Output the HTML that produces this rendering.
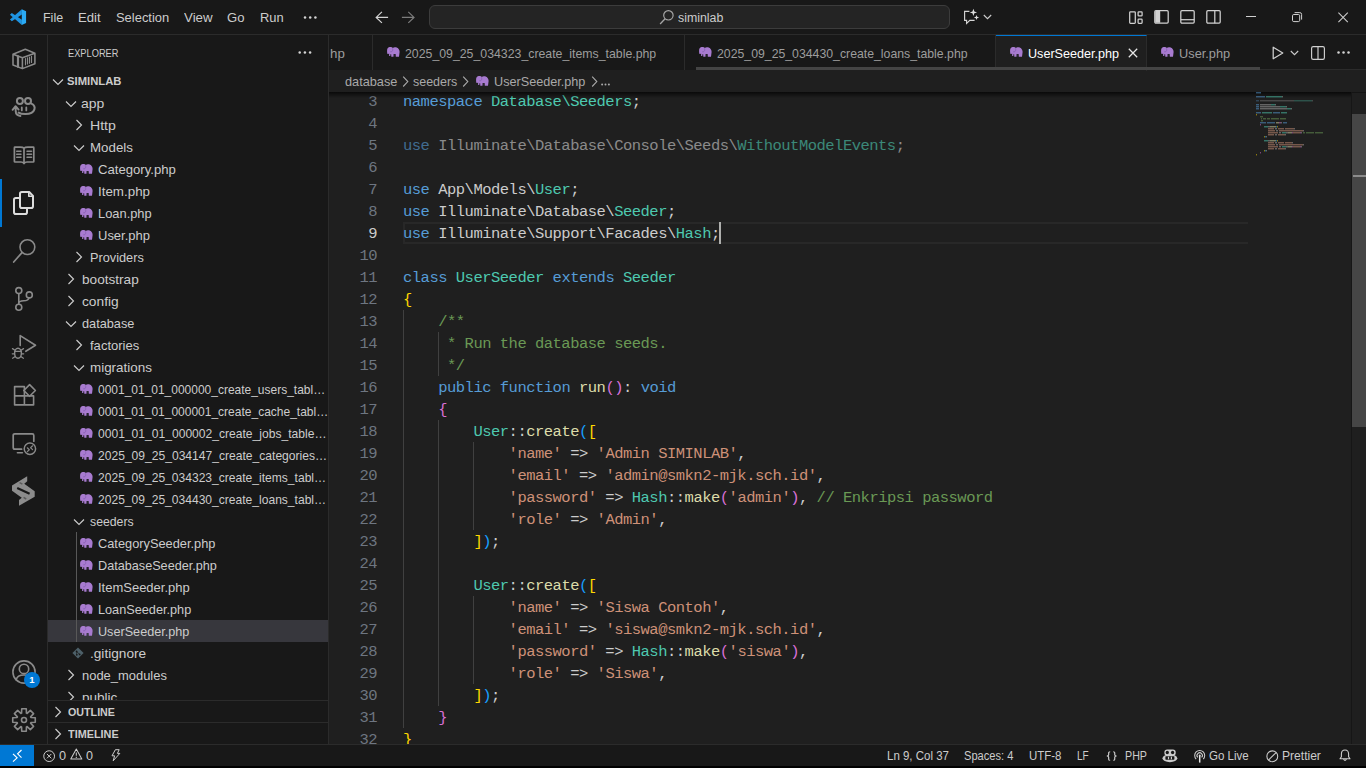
<!DOCTYPE html>
<html>
<head>
<meta charset="utf-8">
<title>UserSeeder.php - siminlab - Visual Studio Code</title>
<style>
*{box-sizing:border-box;margin:0;padding:0}
html,body{width:1366px;height:768px;overflow:hidden;background:#181818}
body{font-family:"Liberation Sans",sans-serif;font-size:13px;color:#cccccc;position:relative}
.abs{position:absolute}
svg{display:block;overflow:visible}
#titlebar{position:absolute;left:0;top:0;width:1366px;height:35px;background:#181818;border-bottom:1px solid #2b2b2b}
#cmd{position:absolute;left:429px;top:5px;width:521px;height:24px;border:1px solid #3c3c3c;border-radius:6px;background:#242424}
#activity{position:absolute;left:0;top:35px;width:48px;height:709px;background:#181818;border-right:1px solid #2b2b2b}
#sidebar{position:absolute;left:48px;top:35px;width:281px;height:709px;background:#181818;border-right:1px solid #2b2b2b;overflow:hidden}
.sel{background:#37373d}
#editor{position:absolute;left:329px;top:35px;width:1037px;height:709px;background:#1f1f1f;overflow:hidden}
#tabs{position:absolute;left:0;top:0;width:1037px;height:35px;background:#181818;border-bottom:1px solid #2b2b2b}
.tab{position:absolute;top:0;height:35px;border-right:1px solid #2b2b2b;background:#181818}
.tab.active{background:#1f1f1f;border-top:1px solid #0078d4;height:36px}
#code{position:absolute;left:0;top:0;width:1037px;height:709px;font-family:"Liberation Mono",monospace;color:#cccccc}
.ln{position:absolute;text-align:right;height:22px;line-height:22px;white-space:pre}
.cl{position:absolute;height:22px;line-height:22px;white-space:pre}
.k{color:#569cd6}.c{color:#4ec9b0}.f{color:#dcdcaa}.s{color:#ce9178}.m{color:#6a9955}
.b1{color:#ffd700}.b2{color:#da70d6}.b3{color:#179fff}
.dim{opacity:.62}
#code{font-size:15.5px;letter-spacing:-0.5045px}
.ln{left:0;width:48.00px}
.cl{left:74px}
#status{position:absolute;left:0;top:744px;width:1366px;height:22px;background:#181818;border-top:1px solid #2b2b2b}
#bottom{position:absolute;left:0;top:766px;width:1366px;height:2px;background:#000}
</style>
</head>
<body>
<div id="titlebar">
<svg class="abs" style="left:4px;top:4px" width="32" height="28" viewBox="0 0 878 768" ><path d="M490 145 L490 285 L215 472 L163 425 Z" fill="#1f94e2"/><path d="M490 575 L490 435 L215 248 L163 295 Z" fill="#1f94e2"/><path d="M488 143 L606 200 V520 L488 577 Z" fill="#2aaaf4"/></svg>
<span class="abs " style="transform-origin:0 50%;transform:scaleX(0.9593);left:42.70px;top:0px;line-height:35px;font-size:13px;white-space:pre">File</span>
<span class="abs " style="transform-origin:0 50%;transform:scaleX(1.0086);left:78.00px;top:0px;line-height:35px;font-size:13px;white-space:pre">Edit</span>
<span class="abs " style="transform-origin:0 50%;transform:scaleX(0.9947);left:115.60px;top:0px;line-height:35px;font-size:13px;white-space:pre">Selection</span>
<span class="abs " style="transform-origin:0 50%;transform:scaleX(1.0231);left:183.80px;top:0px;line-height:35px;font-size:13px;white-space:pre">View</span>
<span class="abs " style="transform-origin:0 50%;transform:scaleX(1.0090);left:227.10px;top:0px;line-height:35px;font-size:13px;white-space:pre">Go</span>
<span class="abs " style="transform-origin:0 50%;transform:scaleX(0.9933);left:259.90px;top:0px;line-height:35px;font-size:13px;white-space:pre">Run</span>
<svg class="abs" style="left:303px;top:14.5px" width="15" height="5" viewBox="0 0 15 5" ><circle cx="2" cy="2.5" r="1.25" fill="#d4d4d4"/><circle cx="7.2" cy="2.5" r="1.25" fill="#d4d4d4"/><circle cx="12.4" cy="2.5" r="1.25" fill="#d4d4d4"/></svg>
<svg class="abs" style="left:375px;top:11px" width="14" height="13" viewBox="0 0 14 13" ><path d="M6.9 .9 L1.2 6.4 L6.9 11.9 M1.4 6.4 H13.1" fill="none" stroke="#d4d4d4" stroke-width="1.2"/></svg>
<svg class="abs" style="left:401px;top:11px" width="14" height="13" viewBox="0 0 14 13" ><path d="M7.3 .9 L13 6.4 L7.3 11.9 M12.8 6.4 H.9" fill="none" stroke="#7c7c7c" stroke-width="1.2"/></svg>
<div id="cmd"></div>
<svg class="abs" style="left:659px;top:9.5px" width="15" height="15" viewBox="0 0 15 15" ><circle cx="9.4" cy="5.3" r="4.7" fill="none" stroke="#a6a6a6" stroke-width="1.2"/><path d="M6.1 8.7 L1.1 14" stroke="#a6a6a6" stroke-width="1.3" fill="none"/></svg>
<span class="abs " style="transform-origin:0 50%;transform:scaleX(0.9878);left:677.60px;top:6px;line-height:24px;font-size:12.5px;white-space:pre">siminlab</span>
<svg class="abs" style="left:963px;top:9px" width="17" height="16" viewBox="0 0 17 16" ><path d="M6.4 2.4 H1.6 V11.3 H3.6 V14.4 L6.8 11.3 H11.6" fill="none" stroke="#d4d4d4" stroke-width="1.15" stroke-linejoin="miter"/><path d="M10.4 -.3 L11.35 2.45 L14.1 3.4 L11.35 4.35 L10.4 7.1 L9.45 4.35 L6.7 3.4 L9.45 2.45 Z" fill="#dedede"/><path d="M13.5 5.9 L14.2 7.8 L16.1 8.5 L14.2 9.2 L13.5 11.1 L12.8 9.2 L10.9 8.5 L12.8 7.8 Z" fill="#dedede"/></svg>
<svg class="abs" style="left:983px;top:14px" width="9" height="6" viewBox="0 0 9 6" ><path d="M.8 1 L4.5 4.7 L8.2 1" fill="none" stroke="#ccc" stroke-width="1.1"/></svg>
<svg class="abs" style="left:1128.5px;top:10.5px" width="14" height="13" viewBox="0 0 14 13" ><rect x=".7" y=".8" width="5.6" height="11.5" rx=".8" fill="none" stroke="#d0d0d0" stroke-width="1.25"/><rect x="9.1" y=".8" width="4" height="4.1" rx=".7" fill="none" stroke="#d0d0d0" stroke-width="1.25"/><rect x="9.1" y="8.2" width="4" height="4.1" rx=".7" fill="none" stroke="#d0d0d0" stroke-width="1.25"/></svg>
<svg class="abs" style="left:1153.5px;top:10px" width="15" height="14" viewBox="0 0 15 14" ><rect x=".8" y=".6" width="13.4" height="12.6" rx="1.1" fill="none" stroke="#d0d0d0" stroke-width="1.25"/><path d="M1.2 1.8 Q1.2 1 2 1 H6.2 V12.8 H2 Q1.2 12.8 1.2 12 Z" fill="#d2d2d2"/></svg>
<svg class="abs" style="left:1179.5px;top:10px" width="15" height="14" viewBox="0 0 15 14" ><rect x=".8" y=".6" width="13.4" height="12.6" rx="1.1" fill="none" stroke="#d0d0d0" stroke-width="1.25"/><path d="M.8 9.7 H14.2" stroke="#d0d0d0" stroke-width="1.25"/></svg>
<svg class="abs" style="left:1205.5px;top:10px" width="15" height="14" viewBox="0 0 15 14" ><rect x=".8" y=".6" width="13.4" height="12.6" rx="1.1" fill="none" stroke="#d0d0d0" stroke-width="1.25"/><path d="M8.8 .6 V13.2" stroke="#d0d0d0" stroke-width="1.25"/></svg>
<svg class="abs" style="left:1246px;top:16px" width="10" height="2" viewBox="0 0 10 2" ><rect x="0" y="0" width="10" height="1" fill="#d0d0d0"/></svg>
<svg class="abs" style="left:1292px;top:12px" width="10" height="11" viewBox="0 0 10 11" ><rect x=".5" y="2.5" width="7.2" height="7.1" rx="1.3" fill="none" stroke="#d0d0d0" stroke-width="1"/><path d="M2.6 .6 H7.8 Q9.6 .6 9.6 2.4 V7.6" fill="none" stroke="#d0d0d0" stroke-width="1"/></svg>
<svg class="abs" style="left:1338px;top:12px" width="10" height="11" viewBox="0 0 10 11" ><path d="M.4 .6 L9.8 10.2 M9.8 .6 L.4 10.2" stroke="#ccc" stroke-width="1.05" fill="none"/></svg>
</div>
<div id="activity">
<svg class="abs" style="left:12px;top:12px" width="24" height="24" viewBox="0 0 24 24" ><path d="M1 7.3 L13.3 2.3 L22.9 6.2 V16.8 L10.4 21.6 L1 18 Z M1 7.3 L10.4 10.8 L22.9 6.2 M10.4 10.8 V21.6" fill="none" stroke="#8a8a8a" stroke-width="1.55" stroke-linejoin="round" stroke-linecap="round" /><path d="M6 9.4 V19.8" fill="none" stroke="#8a8a8a" stroke-width="2.2" stroke-linejoin="round" stroke-linecap="round" /><path d="M13.5 11.6 V17.8 M15.5 10.8 V17 M17.5 10 V16.2 M19.5 9.2 V15.4" fill="none" stroke="#8a8a8a" stroke-width="1.15" stroke-linejoin="round" stroke-linecap="round" /></svg>
<svg class="abs" style="left:12px;top:60px" width="24" height="24" viewBox="0 0 24 24" ><circle cx="7.9" cy="6" r="3" fill="none" stroke="#8a8a8a" stroke-width="2" stroke-linejoin="round" stroke-linecap="round" /><circle cx="16" cy="6" r="3" fill="none" stroke="#8a8a8a" stroke-width="2" stroke-linejoin="round" stroke-linecap="round" /><path d="M19.4 8.6 C22 9.8 23 12.4 22.4 14.4 C21.4 17.6 17.4 19 13.4 19 C10.6 19 8 18.6 6.6 17.6" fill="none" stroke="#8a8a8a" stroke-width="2" stroke-linejoin="round" stroke-linecap="round" /><path d="M9.8 12.4 V15.4 M14.3 12.4 V15.4" fill="none" stroke="#8a8a8a" stroke-width="1.8" stroke-linejoin="round" stroke-linecap="round" /><path d="M.6 14.8 L3.6 11.2 L6.6 14.6 M3.7 11.6 V16.4 C3.8 19 5.6 20.6 8.4 21" fill="none" stroke="#8a8a8a" stroke-width="1.9" stroke-linejoin="round" stroke-linecap="round" /></svg>
<svg class="abs" style="left:12px;top:108px" width="24" height="24" viewBox="0 0 24 24" ><path d="M12 5.2 C11 4.2 9.6 4.1 8.4 4.1 H3 Q2.4 4.1 2.4 4.7 V18.4 Q2.4 19 3 19 H9 C10.4 19 11.4 19.6 12 20.6 C12.6 19.6 13.6 19 15 19 H21.2 Q21.8 19 21.8 18.4 V4.7 Q21.8 4.1 21.2 4.1 H15.6 C14.4 4.1 13 4.2 12 5.2 Z M12 5.2 V20.4" fill="none" stroke="#8a8a8a" stroke-width="1.7" stroke-linejoin="round" stroke-linecap="round" /><path d="M4.7 8.3 H9 M4.7 11.25 H9 M4.7 14.25 H9 M15 8.3 H19.6 M15 11.25 H19.6 M15 14.25 H19.6" fill="none" stroke="#8a8a8a" stroke-width="1.45" stroke-linejoin="round" stroke-linecap="round" /></svg>
<svg class="abs" style="left:12px;top:156px" width="24" height="24" viewBox="0 0 24 24" ><path d="M8 15.2 V2.8 Q8 1 9.8 1 H17.2 L21 4.9 V15.2 Q21 17 19.2 17 H9.8 Q8 17 8 15.2 Z" fill="none" stroke="#dcdcdc" stroke-width="2" stroke-linejoin="round" stroke-linecap="round" /><path d="M16.8 1.4 V5.3 H20.6" fill="none" stroke="#dcdcdc" stroke-width="1.6" stroke-linejoin="round" stroke-linecap="round" /><path d="M7.2 7 H3.8 Q2 7 2 8.8 V21.2 Q2 23 3.8 23 H13.2 Q15 23 15 21.2 V17.6" fill="none" stroke="#dcdcdc" stroke-width="2" stroke-linejoin="round" stroke-linecap="round" /></svg>
<svg class="abs" style="left:12px;top:204px" width="24" height="24" viewBox="0 0 24 24" ><circle cx="15.4" cy="8.1" r="7.4" fill="none" stroke="#8a8a8a" stroke-width="1.6" stroke-linejoin="round" stroke-linecap="round" /><path d="M10 13.6 L1.7 23" fill="none" stroke="#8a8a8a" stroke-width="1.7" stroke-linejoin="round" stroke-linecap="round" /></svg>
<svg class="abs" style="left:12px;top:252px" width="24" height="24" viewBox="0 0 24 24" ><circle cx="6.8" cy="3.6" r="3" fill="none" stroke="#8a8a8a" stroke-width="1.6" stroke-linejoin="round" stroke-linecap="round" /><circle cx="6.8" cy="20.2" r="3" fill="none" stroke="#8a8a8a" stroke-width="1.6" stroke-linejoin="round" stroke-linecap="round" /><circle cx="17.3" cy="7.9" r="3" fill="none" stroke="#8a8a8a" stroke-width="1.6" stroke-linejoin="round" stroke-linecap="round" /><path d="M6.8 6.8 V17 M16.9 11 C16.6 13.4 14.6 13.7 11.6 13.8 C9 13.9 7 14.4 6.8 16.4" fill="none" stroke="#8a8a8a" stroke-width="1.6" stroke-linejoin="round" stroke-linecap="round" /></svg>
<svg class="abs" style="left:12px;top:300px" width="24" height="24" viewBox="0 0 24 24" ><path d="M8.2 10.4 V.6 L23.5 10.2 L13.8 16.3" fill="none" stroke="#8a8a8a" stroke-width="1.6" stroke-linejoin="round" stroke-linecap="round" /><ellipse cx="6" cy="18.2" rx="3.4" ry="5" fill="none" stroke="#8a8a8a" stroke-width="1.5" stroke-linejoin="round" stroke-linecap="round" /><path d="M2.8 16.4 H9.2" fill="none" stroke="#8a8a8a" stroke-width="1.4" stroke-linejoin="round" stroke-linecap="round" /><path d="M2.6 15 L.5 13.6 M9.4 15 L11.5 13.6 M2.4 18.8 H.3 M11.7 18.8 H9.6 M2.8 21.8 L.6 23.2 M9.2 21.8 L11.4 23.2" fill="none" stroke="#8a8a8a" stroke-width="1.3" stroke-linejoin="round" stroke-linecap="round" /></svg>
<svg class="abs" style="left:12px;top:348px" width="24" height="24" viewBox="0 0 24 24" ><path d="M2.6 3.6 H12.4 V12.9 H21.6 V21.9 H2.6 Z M2.6 12.9 H12.4 V21.9" fill="none" stroke="#8a8a8a" stroke-width="1.6" stroke-linejoin="round" stroke-linecap="round" /><path d="M17.6 1.6 L23.4 7.5 L17.6 13.3 L11.8 7.5 Z" fill="none" stroke="#8a8a8a" stroke-width="1.6" stroke-linejoin="round" stroke-linecap="round" /></svg>
<svg class="abs" style="left:12px;top:396px" width="24" height="24" viewBox="0 0 24 24" ><path d="M9.6 18.2 H2.8 Q1.2 18.2 1.2 16.6 V4.4 Q1.2 2.8 2.8 2.8 H20.2 Q21.8 2.8 21.8 4.4 V10.2" fill="none" stroke="#8a8a8a" stroke-width="1.7" stroke-linejoin="round" stroke-linecap="round" /><path d="M5.4 21.8 H10.4" fill="none" stroke="#8a8a8a" stroke-width="1.6" stroke-linejoin="round" stroke-linecap="round" /><circle cx="17.9" cy="17.7" r="5.7" fill="none" stroke="#8a8a8a" stroke-width="1.5" stroke-linejoin="round" stroke-linecap="round" /><path d="M15.3 16.8 L17.3 18.7 L15.3 20.6 M20.6 14.8 L18.6 16.7 L20.6 18.6" fill="none" stroke="#8a8a8a" stroke-width="1.2" stroke-linejoin="round" stroke-linecap="round" /></svg>
<svg class="abs" style="left:8px;top:440px" width="32" height="32" viewBox="0 0 32 32" ><path d="M19.2 1.25 V6.25 L16.25 8.75 L26.7 16.25 V21.7 L11 30.8 V25 L13.75 22.7 L4 15.8 V10.4 Z" fill="#8c8c8c"/><path d="M9.2 13 L21.6 18.8" stroke="#181818" stroke-width="2.2" fill="none"/><path d="M11.6 7.6 L14.4 9.2 M15.6 22.4 L18.2 24" stroke="#555555" stroke-width="1.5" fill="none" opacity=".9"/></svg>
<svg class="abs" style="left:12px;top:625px" width="24" height="24" viewBox="0 0 24 24" ><circle cx="12" cy="12" r="11.1" fill="none" stroke="#8a8a8a" stroke-width="1.6" stroke-linejoin="round" stroke-linecap="round" /><circle cx="12" cy="8.9" r="4.7" fill="none" stroke="#8a8a8a" stroke-width="1.6" stroke-linejoin="round" stroke-linecap="round" /><path d="M4.2 19.8 C5 16.2 8 15 12 15 C16 15 19 16.2 19.8 19.8" fill="none" stroke="#8a8a8a" stroke-width="1.6" stroke-linejoin="round" stroke-linecap="round" /></svg>
<div class="abs" style="left:24px;top:637px;width:16px;height:16px;border-radius:8px;background:#0078d4"></div>
<span class="abs" style="left:24px;top:637px;width:16px;height:16px;line-height:16px;text-align:center;font-size:9.5px;font-weight:bold;color:#fff">1</span>
<svg class="abs" style="left:12px;top:673px" width="24" height="24" viewBox="0 0 24 24" ><path d="M9.72 0.73 L14.28 0.73 L14.43 5.12 L15.14 5.41 L18.35 2.41 L21.59 5.65 L18.59 8.86 L18.88 9.57 L23.27 9.72 L23.27 14.28 L18.88 14.43 L18.59 15.14 L21.59 18.35 L18.35 21.59 L15.14 18.59 L14.43 18.88 L14.28 23.27 L9.72 23.27 L9.57 18.88 L8.86 18.59 L5.65 21.59 L2.41 18.35 L5.41 15.14 L5.12 14.43 L0.73 14.28 L0.73 9.72 L5.12 9.57 L5.41 8.86 L2.41 5.65 L5.65 2.41 L8.86 5.41 L9.57 5.12 Z" fill="none" stroke="#8a8a8a" stroke-width="1.6" stroke-linejoin="round" stroke-linecap="round" /><circle cx="12" cy="12" r="2.5" fill="none" stroke="#8a8a8a" stroke-width="1.6" stroke-linejoin="round" stroke-linecap="round" /></svg>
<div class="abs" style="left:0;top:144px;width:2px;height:48px;background:#0078d4"></div>
</div>
<div id="sidebar">
<span class="abs " style="transform-origin:0 50%;transform:scaleX(0.8428);left:19.80px;top:0px;line-height:36px;font-size:11px;color:#cccccc;white-space:pre">EXPLORER</span>
<svg class="abs" style="left:250px;top:15px" width="15" height="5" viewBox="0 0 15 5" ><circle cx="1.7" cy="2.5" r="1.25" fill="#d4d4d4"/><circle cx="6.9" cy="2.5" r="1.25" fill="#d4d4d4"/><circle cx="12.1" cy="2.5" r="1.25" fill="#d4d4d4"/></svg>
<div class="abs" style="left:0;top:0;width:280px;height:665px;overflow:hidden"><div class="abs sel" style="left:0;top:585px;width:280px;height:22px"></div>
<div class="abs" style="left:28px;top:497px;width:1px;height:110px;background:#585858"></div>
<svg class="abs" style="left:4px;top:42.5px" width="12" height="8" viewBox="0 0 12 8" ><path d="M1 1.5 L6 6.5 L11 1.5" fill="none" stroke="#cccccc" stroke-width="1.15" stroke-linejoin="miter"/></svg>
<span class="abs " style="transform-origin:0 50%;transform:scaleX(1.0231);left:19.20px;top:35px;line-height:22px;font-size:11px;color:#cccccc;font-weight:bold;white-space:pre">SIMINLAB</span>
<svg class="abs" style="left:17.200000000000003px;top:64.5px" width="12" height="8" viewBox="0 0 12 8" ><path d="M1 1.5 L6 6.5 L11 1.5" fill="none" stroke="#cccccc" stroke-width="1.15" stroke-linejoin="miter"/></svg>
<span class="abs " style="transform-origin:0 50%;transform:scaleX(1.0736);left:33.30px;top:58px;line-height:22px;font-size:13px;color:#cccccc;white-space:pre">app</span>
<svg class="abs" style="left:27.200000000000003px;top:84px" width="8" height="12" viewBox="0 0 8 12" ><path d="M1.5 1 L6.5 6 L1.5 11" fill="none" stroke="#cccccc" stroke-width="1.15"/></svg>
<span class="abs " style="transform-origin:0 50%;transform:scaleX(1.0862);left:42.00px;top:80px;line-height:22px;font-size:13px;color:#cccccc;white-space:pre">Http</span>
<svg class="abs" style="left:25.200000000000003px;top:108.5px" width="12" height="8" viewBox="0 0 12 8" ><path d="M1 1.5 L6 6.5 L11 1.5" fill="none" stroke="#cccccc" stroke-width="1.15" stroke-linejoin="miter"/></svg>
<span class="abs " style="transform-origin:0 50%;transform:scaleX(1.0233);left:42.00px;top:102px;line-height:22px;font-size:13px;color:#cccccc;white-space:pre">Models</span>
<svg class="abs" style="left:31.700000000000003px;top:129.3px" width="12.8" height="9.8" viewBox="0 0 12.8 9.8" ><path d="M.5 1.5 C1.2 .4 2.4 0 3.4 0 C4.4 0 5.3 .3 5.8 1 C6.3 .5 7.2 .3 8.2 .35 C9.6 .4 10.6 .9 11.4 1.8 C12.2 2.7 12.7 3.9 12.6 5.2 L12 9.7 L8.8 9.7 L8.6 7.1 L6.6 7.1 L6.5 9.7 L4.3 9.7 L4.2 7.3 L3.4 7.3 L3.3 9 L2.1 9 L2.1 6.6 C1.8 6.9 1.4 7 1 6.9 L.3 6.8 C.1 5.6 0 4.3 .1 3.2 C.15 2.5 .25 1.9 .5 1.5 Z" fill="#a87bd0"/><path d="M5.5 1.2 C6 2.2 5.9 3.8 5 4.6 C4.4 5.1 3.6 5.1 3.1 4.7" fill="none" stroke="#6b4a9a" stroke-width=".6" opacity=".7"/><path d="M7.6 7.2 V9.7" stroke="#5a3d86" stroke-width=".5" opacity=".55"/></svg>
<span class="abs " style="transform-origin:0 50%;transform:scaleX(1.0105);left:49.80px;top:124px;line-height:22px;font-size:13px;color:#cccccc;white-space:pre">Category.php</span>
<svg class="abs" style="left:31.700000000000003px;top:151.3px" width="12.8" height="9.8" viewBox="0 0 12.8 9.8" ><path d="M.5 1.5 C1.2 .4 2.4 0 3.4 0 C4.4 0 5.3 .3 5.8 1 C6.3 .5 7.2 .3 8.2 .35 C9.6 .4 10.6 .9 11.4 1.8 C12.2 2.7 12.7 3.9 12.6 5.2 L12 9.7 L8.8 9.7 L8.6 7.1 L6.6 7.1 L6.5 9.7 L4.3 9.7 L4.2 7.3 L3.4 7.3 L3.3 9 L2.1 9 L2.1 6.6 C1.8 6.9 1.4 7 1 6.9 L.3 6.8 C.1 5.6 0 4.3 .1 3.2 C.15 2.5 .25 1.9 .5 1.5 Z" fill="#a87bd0"/><path d="M5.5 1.2 C6 2.2 5.9 3.8 5 4.6 C4.4 5.1 3.6 5.1 3.1 4.7" fill="none" stroke="#6b4a9a" stroke-width=".6" opacity=".7"/><path d="M7.6 7.2 V9.7" stroke="#5a3d86" stroke-width=".5" opacity=".55"/></svg>
<span class="abs " style="transform-origin:0 50%;transform:scaleX(1.0278);left:49.80px;top:146px;line-height:22px;font-size:13px;color:#cccccc;white-space:pre">Item.php</span>
<svg class="abs" style="left:31.700000000000003px;top:173.3px" width="12.8" height="9.8" viewBox="0 0 12.8 9.8" ><path d="M.5 1.5 C1.2 .4 2.4 0 3.4 0 C4.4 0 5.3 .3 5.8 1 C6.3 .5 7.2 .3 8.2 .35 C9.6 .4 10.6 .9 11.4 1.8 C12.2 2.7 12.7 3.9 12.6 5.2 L12 9.7 L8.8 9.7 L8.6 7.1 L6.6 7.1 L6.5 9.7 L4.3 9.7 L4.2 7.3 L3.4 7.3 L3.3 9 L2.1 9 L2.1 6.6 C1.8 6.9 1.4 7 1 6.9 L.3 6.8 C.1 5.6 0 4.3 .1 3.2 C.15 2.5 .25 1.9 .5 1.5 Z" fill="#a87bd0"/><path d="M5.5 1.2 C6 2.2 5.9 3.8 5 4.6 C4.4 5.1 3.6 5.1 3.1 4.7" fill="none" stroke="#6b4a9a" stroke-width=".6" opacity=".7"/><path d="M7.6 7.2 V9.7" stroke="#5a3d86" stroke-width=".5" opacity=".55"/></svg>
<span class="abs " style="transform-origin:0 50%;transform:scaleX(0.9901);left:49.80px;top:168px;line-height:22px;font-size:13px;color:#cccccc;white-space:pre">Loan.php</span>
<svg class="abs" style="left:31.700000000000003px;top:195.3px" width="12.8" height="9.8" viewBox="0 0 12.8 9.8" ><path d="M.5 1.5 C1.2 .4 2.4 0 3.4 0 C4.4 0 5.3 .3 5.8 1 C6.3 .5 7.2 .3 8.2 .35 C9.6 .4 10.6 .9 11.4 1.8 C12.2 2.7 12.7 3.9 12.6 5.2 L12 9.7 L8.8 9.7 L8.6 7.1 L6.6 7.1 L6.5 9.7 L4.3 9.7 L4.2 7.3 L3.4 7.3 L3.3 9 L2.1 9 L2.1 6.6 C1.8 6.9 1.4 7 1 6.9 L.3 6.8 C.1 5.6 0 4.3 .1 3.2 C.15 2.5 .25 1.9 .5 1.5 Z" fill="#a87bd0"/><path d="M5.5 1.2 C6 2.2 5.9 3.8 5 4.6 C4.4 5.1 3.6 5.1 3.1 4.7" fill="none" stroke="#6b4a9a" stroke-width=".6" opacity=".7"/><path d="M7.6 7.2 V9.7" stroke="#5a3d86" stroke-width=".5" opacity=".55"/></svg>
<span class="abs " style="transform-origin:0 50%;transform:scaleX(0.9991);left:49.80px;top:190px;line-height:22px;font-size:13px;color:#cccccc;white-space:pre">User.php</span>
<svg class="abs" style="left:27.200000000000003px;top:216px" width="8" height="12" viewBox="0 0 8 12" ><path d="M1.5 1 L6.5 6 L1.5 11" fill="none" stroke="#cccccc" stroke-width="1.15"/></svg>
<span class="abs " style="transform-origin:0 50%;transform:scaleX(0.9796);left:42.00px;top:212px;line-height:22px;font-size:13px;color:#cccccc;white-space:pre">Providers</span>
<svg class="abs" style="left:19.200000000000003px;top:238px" width="8" height="12" viewBox="0 0 8 12" ><path d="M1.5 1 L6.5 6 L1.5 11" fill="none" stroke="#cccccc" stroke-width="1.15"/></svg>
<span class="abs " style="transform-origin:0 50%;transform:scaleX(1.0461);left:33.80px;top:234px;line-height:22px;font-size:13px;color:#cccccc;white-space:pre">bootstrap</span>
<svg class="abs" style="left:19.200000000000003px;top:260px" width="8" height="12" viewBox="0 0 8 12" ><path d="M1.5 1 L6.5 6 L1.5 11" fill="none" stroke="#cccccc" stroke-width="1.15"/></svg>
<span class="abs " style="transform-origin:0 50%;transform:scaleX(1.0575);left:33.80px;top:256px;line-height:22px;font-size:13px;color:#cccccc;white-space:pre">config</span>
<svg class="abs" style="left:17.200000000000003px;top:284.5px" width="12" height="8" viewBox="0 0 12 8" ><path d="M1 1.5 L6 6.5 L11 1.5" fill="none" stroke="#cccccc" stroke-width="1.15" stroke-linejoin="miter"/></svg>
<span class="abs " style="transform-origin:0 50%;transform:scaleX(0.9794);left:33.80px;top:278px;line-height:22px;font-size:13px;color:#cccccc;white-space:pre">database</span>
<svg class="abs" style="left:27.200000000000003px;top:304px" width="8" height="12" viewBox="0 0 8 12" ><path d="M1.5 1 L6.5 6 L1.5 11" fill="none" stroke="#cccccc" stroke-width="1.15"/></svg>
<span class="abs " style="transform-origin:0 50%;transform:scaleX(1.0032);left:42.00px;top:300px;line-height:22px;font-size:13px;color:#cccccc;white-space:pre">factories</span>
<svg class="abs" style="left:25.200000000000003px;top:328.5px" width="12" height="8" viewBox="0 0 12 8" ><path d="M1 1.5 L6 6.5 L11 1.5" fill="none" stroke="#cccccc" stroke-width="1.15" stroke-linejoin="miter"/></svg>
<span class="abs " style="transform-origin:0 50%;transform:scaleX(1.0322);left:42.00px;top:322px;line-height:22px;font-size:13px;color:#cccccc;white-space:pre">migrations</span>
<svg class="abs" style="left:31.700000000000003px;top:349.3px" width="12.8" height="9.8" viewBox="0 0 12.8 9.8" ><path d="M.5 1.5 C1.2 .4 2.4 0 3.4 0 C4.4 0 5.3 .3 5.8 1 C6.3 .5 7.2 .3 8.2 .35 C9.6 .4 10.6 .9 11.4 1.8 C12.2 2.7 12.7 3.9 12.6 5.2 L12 9.7 L8.8 9.7 L8.6 7.1 L6.6 7.1 L6.5 9.7 L4.3 9.7 L4.2 7.3 L3.4 7.3 L3.3 9 L2.1 9 L2.1 6.6 C1.8 6.9 1.4 7 1 6.9 L.3 6.8 C.1 5.6 0 4.3 .1 3.2 C.15 2.5 .25 1.9 .5 1.5 Z" fill="#a87bd0"/><path d="M5.5 1.2 C6 2.2 5.9 3.8 5 4.6 C4.4 5.1 3.6 5.1 3.1 4.7" fill="none" stroke="#6b4a9a" stroke-width=".6" opacity=".7"/><path d="M7.6 7.2 V9.7" stroke="#5a3d86" stroke-width=".5" opacity=".55"/></svg>
<span class="abs " style="transform-origin:0 50%;transform:scaleX(0.9214);left:49.80px;top:344px;line-height:22px;font-size:13px;color:#cccccc;white-space:pre">0001_01_01_000000_create_users_tabl…</span>
<svg class="abs" style="left:31.700000000000003px;top:371.3px" width="12.8" height="9.8" viewBox="0 0 12.8 9.8" ><path d="M.5 1.5 C1.2 .4 2.4 0 3.4 0 C4.4 0 5.3 .3 5.8 1 C6.3 .5 7.2 .3 8.2 .35 C9.6 .4 10.6 .9 11.4 1.8 C12.2 2.7 12.7 3.9 12.6 5.2 L12 9.7 L8.8 9.7 L8.6 7.1 L6.6 7.1 L6.5 9.7 L4.3 9.7 L4.2 7.3 L3.4 7.3 L3.3 9 L2.1 9 L2.1 6.6 C1.8 6.9 1.4 7 1 6.9 L.3 6.8 C.1 5.6 0 4.3 .1 3.2 C.15 2.5 .25 1.9 .5 1.5 Z" fill="#a87bd0"/><path d="M5.5 1.2 C6 2.2 5.9 3.8 5 4.6 C4.4 5.1 3.6 5.1 3.1 4.7" fill="none" stroke="#6b4a9a" stroke-width=".6" opacity=".7"/><path d="M7.6 7.2 V9.7" stroke="#5a3d86" stroke-width=".5" opacity=".55"/></svg>
<span class="abs " style="transform-origin:0 50%;transform:scaleX(0.9230);left:49.80px;top:366px;line-height:22px;font-size:13px;color:#cccccc;white-space:pre">0001_01_01_000001_create_cache_tabl…</span>
<svg class="abs" style="left:31.700000000000003px;top:393.3px" width="12.8" height="9.8" viewBox="0 0 12.8 9.8" ><path d="M.5 1.5 C1.2 .4 2.4 0 3.4 0 C4.4 0 5.3 .3 5.8 1 C6.3 .5 7.2 .3 8.2 .35 C9.6 .4 10.6 .9 11.4 1.8 C12.2 2.7 12.7 3.9 12.6 5.2 L12 9.7 L8.8 9.7 L8.6 7.1 L6.6 7.1 L6.5 9.7 L4.3 9.7 L4.2 7.3 L3.4 7.3 L3.3 9 L2.1 9 L2.1 6.6 C1.8 6.9 1.4 7 1 6.9 L.3 6.8 C.1 5.6 0 4.3 .1 3.2 C.15 2.5 .25 1.9 .5 1.5 Z" fill="#a87bd0"/><path d="M5.5 1.2 C6 2.2 5.9 3.8 5 4.6 C4.4 5.1 3.6 5.1 3.1 4.7" fill="none" stroke="#6b4a9a" stroke-width=".6" opacity=".7"/><path d="M7.6 7.2 V9.7" stroke="#5a3d86" stroke-width=".5" opacity=".55"/></svg>
<span class="abs " style="transform-origin:0 50%;transform:scaleX(0.9297);left:49.80px;top:388px;line-height:22px;font-size:13px;color:#cccccc;white-space:pre">0001_01_01_000002_create_jobs_table…</span>
<svg class="abs" style="left:31.700000000000003px;top:415.3px" width="12.8" height="9.8" viewBox="0 0 12.8 9.8" ><path d="M.5 1.5 C1.2 .4 2.4 0 3.4 0 C4.4 0 5.3 .3 5.8 1 C6.3 .5 7.2 .3 8.2 .35 C9.6 .4 10.6 .9 11.4 1.8 C12.2 2.7 12.7 3.9 12.6 5.2 L12 9.7 L8.8 9.7 L8.6 7.1 L6.6 7.1 L6.5 9.7 L4.3 9.7 L4.2 7.3 L3.4 7.3 L3.3 9 L2.1 9 L2.1 6.6 C1.8 6.9 1.4 7 1 6.9 L.3 6.8 C.1 5.6 0 4.3 .1 3.2 C.15 2.5 .25 1.9 .5 1.5 Z" fill="#a87bd0"/><path d="M5.5 1.2 C6 2.2 5.9 3.8 5 4.6 C4.4 5.1 3.6 5.1 3.1 4.7" fill="none" stroke="#6b4a9a" stroke-width=".6" opacity=".7"/><path d="M7.6 7.2 V9.7" stroke="#5a3d86" stroke-width=".5" opacity=".55"/></svg>
<span class="abs " style="transform-origin:0 50%;transform:scaleX(0.9295);left:49.80px;top:410px;line-height:22px;font-size:13px;color:#cccccc;white-space:pre">2025_09_25_034147_create_categories…</span>
<svg class="abs" style="left:31.700000000000003px;top:437.3px" width="12.8" height="9.8" viewBox="0 0 12.8 9.8" ><path d="M.5 1.5 C1.2 .4 2.4 0 3.4 0 C4.4 0 5.3 .3 5.8 1 C6.3 .5 7.2 .3 8.2 .35 C9.6 .4 10.6 .9 11.4 1.8 C12.2 2.7 12.7 3.9 12.6 5.2 L12 9.7 L8.8 9.7 L8.6 7.1 L6.6 7.1 L6.5 9.7 L4.3 9.7 L4.2 7.3 L3.4 7.3 L3.3 9 L2.1 9 L2.1 6.6 C1.8 6.9 1.4 7 1 6.9 L.3 6.8 C.1 5.6 0 4.3 .1 3.2 C.15 2.5 .25 1.9 .5 1.5 Z" fill="#a87bd0"/><path d="M5.5 1.2 C6 2.2 5.9 3.8 5 4.6 C4.4 5.1 3.6 5.1 3.1 4.7" fill="none" stroke="#6b4a9a" stroke-width=".6" opacity=".7"/><path d="M7.6 7.2 V9.7" stroke="#5a3d86" stroke-width=".5" opacity=".55"/></svg>
<span class="abs " style="transform-origin:0 50%;transform:scaleX(0.9282);left:49.80px;top:432px;line-height:22px;font-size:13px;color:#cccccc;white-space:pre">2025_09_25_034323_create_items_tabl…</span>
<svg class="abs" style="left:31.700000000000003px;top:459.3px" width="12.8" height="9.8" viewBox="0 0 12.8 9.8" ><path d="M.5 1.5 C1.2 .4 2.4 0 3.4 0 C4.4 0 5.3 .3 5.8 1 C6.3 .5 7.2 .3 8.2 .35 C9.6 .4 10.6 .9 11.4 1.8 C12.2 2.7 12.7 3.9 12.6 5.2 L12 9.7 L8.8 9.7 L8.6 7.1 L6.6 7.1 L6.5 9.7 L4.3 9.7 L4.2 7.3 L3.4 7.3 L3.3 9 L2.1 9 L2.1 6.6 C1.8 6.9 1.4 7 1 6.9 L.3 6.8 C.1 5.6 0 4.3 .1 3.2 C.15 2.5 .25 1.9 .5 1.5 Z" fill="#a87bd0"/><path d="M5.5 1.2 C6 2.2 5.9 3.8 5 4.6 C4.4 5.1 3.6 5.1 3.1 4.7" fill="none" stroke="#6b4a9a" stroke-width=".6" opacity=".7"/><path d="M7.6 7.2 V9.7" stroke="#5a3d86" stroke-width=".5" opacity=".55"/></svg>
<span class="abs " style="transform-origin:0 50%;transform:scaleX(0.9281);left:49.80px;top:454px;line-height:22px;font-size:13px;color:#cccccc;white-space:pre">2025_09_25_034430_create_loans_tabl…</span>
<svg class="abs" style="left:25.200000000000003px;top:482.5px" width="12" height="8" viewBox="0 0 12 8" ><path d="M1 1.5 L6 6.5 L11 1.5" fill="none" stroke="#cccccc" stroke-width="1.15" stroke-linejoin="miter"/></svg>
<span class="abs " style="transform-origin:0 50%;transform:scaleX(0.9427);left:42.00px;top:476px;line-height:22px;font-size:13px;color:#cccccc;white-space:pre">seeders</span>
<svg class="abs" style="left:31.700000000000003px;top:503.3px" width="12.8" height="9.8" viewBox="0 0 12.8 9.8" ><path d="M.5 1.5 C1.2 .4 2.4 0 3.4 0 C4.4 0 5.3 .3 5.8 1 C6.3 .5 7.2 .3 8.2 .35 C9.6 .4 10.6 .9 11.4 1.8 C12.2 2.7 12.7 3.9 12.6 5.2 L12 9.7 L8.8 9.7 L8.6 7.1 L6.6 7.1 L6.5 9.7 L4.3 9.7 L4.2 7.3 L3.4 7.3 L3.3 9 L2.1 9 L2.1 6.6 C1.8 6.9 1.4 7 1 6.9 L.3 6.8 C.1 5.6 0 4.3 .1 3.2 C.15 2.5 .25 1.9 .5 1.5 Z" fill="#a87bd0"/><path d="M5.5 1.2 C6 2.2 5.9 3.8 5 4.6 C4.4 5.1 3.6 5.1 3.1 4.7" fill="none" stroke="#6b4a9a" stroke-width=".6" opacity=".7"/><path d="M7.6 7.2 V9.7" stroke="#5a3d86" stroke-width=".5" opacity=".55"/></svg>
<span class="abs " style="transform-origin:0 50%;transform:scaleX(0.9844);left:49.80px;top:498px;line-height:22px;font-size:13px;color:#cccccc;white-space:pre">CategorySeeder.php</span>
<svg class="abs" style="left:31.700000000000003px;top:525.3px" width="12.8" height="9.8" viewBox="0 0 12.8 9.8" ><path d="M.5 1.5 C1.2 .4 2.4 0 3.4 0 C4.4 0 5.3 .3 5.8 1 C6.3 .5 7.2 .3 8.2 .35 C9.6 .4 10.6 .9 11.4 1.8 C12.2 2.7 12.7 3.9 12.6 5.2 L12 9.7 L8.8 9.7 L8.6 7.1 L6.6 7.1 L6.5 9.7 L4.3 9.7 L4.2 7.3 L3.4 7.3 L3.3 9 L2.1 9 L2.1 6.6 C1.8 6.9 1.4 7 1 6.9 L.3 6.8 C.1 5.6 0 4.3 .1 3.2 C.15 2.5 .25 1.9 .5 1.5 Z" fill="#a87bd0"/><path d="M5.5 1.2 C6 2.2 5.9 3.8 5 4.6 C4.4 5.1 3.6 5.1 3.1 4.7" fill="none" stroke="#6b4a9a" stroke-width=".6" opacity=".7"/><path d="M7.6 7.2 V9.7" stroke="#5a3d86" stroke-width=".5" opacity=".55"/></svg>
<span class="abs " style="transform-origin:0 50%;transform:scaleX(0.9733);left:49.80px;top:520px;line-height:22px;font-size:13px;color:#cccccc;white-space:pre">DatabaseSeeder.php</span>
<svg class="abs" style="left:31.700000000000003px;top:547.3px" width="12.8" height="9.8" viewBox="0 0 12.8 9.8" ><path d="M.5 1.5 C1.2 .4 2.4 0 3.4 0 C4.4 0 5.3 .3 5.8 1 C6.3 .5 7.2 .3 8.2 .35 C9.6 .4 10.6 .9 11.4 1.8 C12.2 2.7 12.7 3.9 12.6 5.2 L12 9.7 L8.8 9.7 L8.6 7.1 L6.6 7.1 L6.5 9.7 L4.3 9.7 L4.2 7.3 L3.4 7.3 L3.3 9 L2.1 9 L2.1 6.6 C1.8 6.9 1.4 7 1 6.9 L.3 6.8 C.1 5.6 0 4.3 .1 3.2 C.15 2.5 .25 1.9 .5 1.5 Z" fill="#a87bd0"/><path d="M5.5 1.2 C6 2.2 5.9 3.8 5 4.6 C4.4 5.1 3.6 5.1 3.1 4.7" fill="none" stroke="#6b4a9a" stroke-width=".6" opacity=".7"/><path d="M7.6 7.2 V9.7" stroke="#5a3d86" stroke-width=".5" opacity=".55"/></svg>
<span class="abs " style="transform-origin:0 50%;transform:scaleX(0.9989);left:49.80px;top:542px;line-height:22px;font-size:13px;color:#cccccc;white-space:pre">ItemSeeder.php</span>
<svg class="abs" style="left:31.700000000000003px;top:569.3px" width="12.8" height="9.8" viewBox="0 0 12.8 9.8" ><path d="M.5 1.5 C1.2 .4 2.4 0 3.4 0 C4.4 0 5.3 .3 5.8 1 C6.3 .5 7.2 .3 8.2 .35 C9.6 .4 10.6 .9 11.4 1.8 C12.2 2.7 12.7 3.9 12.6 5.2 L12 9.7 L8.8 9.7 L8.6 7.1 L6.6 7.1 L6.5 9.7 L4.3 9.7 L4.2 7.3 L3.4 7.3 L3.3 9 L2.1 9 L2.1 6.6 C1.8 6.9 1.4 7 1 6.9 L.3 6.8 C.1 5.6 0 4.3 .1 3.2 C.15 2.5 .25 1.9 .5 1.5 Z" fill="#a87bd0"/><path d="M5.5 1.2 C6 2.2 5.9 3.8 5 4.6 C4.4 5.1 3.6 5.1 3.1 4.7" fill="none" stroke="#6b4a9a" stroke-width=".6" opacity=".7"/><path d="M7.6 7.2 V9.7" stroke="#5a3d86" stroke-width=".5" opacity=".55"/></svg>
<span class="abs " style="transform-origin:0 50%;transform:scaleX(0.9766);left:49.80px;top:564px;line-height:22px;font-size:13px;color:#cccccc;white-space:pre">LoanSeeder.php</span>
<svg class="abs" style="left:31.700000000000003px;top:591.3px" width="12.8" height="9.8" viewBox="0 0 12.8 9.8" ><path d="M.5 1.5 C1.2 .4 2.4 0 3.4 0 C4.4 0 5.3 .3 5.8 1 C6.3 .5 7.2 .3 8.2 .35 C9.6 .4 10.6 .9 11.4 1.8 C12.2 2.7 12.7 3.9 12.6 5.2 L12 9.7 L8.8 9.7 L8.6 7.1 L6.6 7.1 L6.5 9.7 L4.3 9.7 L4.2 7.3 L3.4 7.3 L3.3 9 L2.1 9 L2.1 6.6 C1.8 6.9 1.4 7 1 6.9 L.3 6.8 C.1 5.6 0 4.3 .1 3.2 C.15 2.5 .25 1.9 .5 1.5 Z" fill="#a87bd0"/><path d="M5.5 1.2 C6 2.2 5.9 3.8 5 4.6 C4.4 5.1 3.6 5.1 3.1 4.7" fill="none" stroke="#6b4a9a" stroke-width=".6" opacity=".7"/><path d="M7.6 7.2 V9.7" stroke="#5a3d86" stroke-width=".5" opacity=".55"/></svg>
<span class="abs " style="transform-origin:0 50%;transform:scaleX(0.9718);left:49.80px;top:586px;line-height:22px;font-size:13px;color:#cccccc;white-space:pre">UserSeeder.php</span>
<svg class="abs" style="left:24px;top:612px" width="12" height="12" viewBox="0 0 12 12" ><path d="M6 .4 L11.6 6 L6 11.6 L.4 6 Z" fill="#4d6069"/><circle cx="4.6" cy="4.4" r=".9" fill="#181818"/><circle cx="7.6" cy="7.4" r=".9" fill="#181818"/><circle cx="4.8" cy="7.8" r=".9" fill="#181818"/><path d="M4.6 4.4 L7.6 7.4 M4.7 4.6 V7.6" stroke="#181818" stroke-width=".7"/></svg>
<span class="abs " style="transform-origin:0 50%;transform:scaleX(1.0489);left:41.60px;top:608px;line-height:22px;font-size:13px;color:#cccccc;white-space:pre">.gitignore</span>
<svg class="abs" style="left:19.200000000000003px;top:634px" width="8" height="12" viewBox="0 0 8 12" ><path d="M1.5 1 L6.5 6 L1.5 11" fill="none" stroke="#cccccc" stroke-width="1.15"/></svg>
<span class="abs " style="transform-origin:0 50%;transform:scaleX(0.9953);left:33.80px;top:630px;line-height:22px;font-size:13px;color:#cccccc;white-space:pre">node_modules</span>
<svg class="abs" style="left:19.200000000000003px;top:656px" width="8" height="12" viewBox="0 0 8 12" ><path d="M1.5 1 L6.5 6 L1.5 11" fill="none" stroke="#cccccc" stroke-width="1.15"/></svg>
<span class="abs " style="transform-origin:0 50%;transform:scaleX(1.0421);left:33.80px;top:652px;line-height:22px;font-size:13px;color:#cccccc;white-space:pre">public</span></div>
<div class="abs" style="left:0;top:665px;width:280px;height:1px;background:#2b2b2b"></div>
<svg class="abs" style="left:6.299999999999997px;top:671px" width="8" height="12" viewBox="0 0 8 12" ><path d="M1.5 1 L6.5 6 L1.5 11" fill="none" stroke="#cccccc" stroke-width="1.15"/></svg>
<span class="abs " style="transform-origin:0 50%;transform:scaleX(0.9735);left:19.60px;top:666px;line-height:22px;font-size:11px;color:#cccccc;font-weight:bold;white-space:pre">OUTLINE</span>
<div class="abs" style="left:0;top:687px;width:280px;height:1px;background:#2b2b2b"></div>
<svg class="abs" style="left:6.299999999999997px;top:693px" width="8" height="12" viewBox="0 0 8 12" ><path d="M1.5 1 L6.5 6 L1.5 11" fill="none" stroke="#cccccc" stroke-width="1.15"/></svg>
<span class="abs " style="transform-origin:0 50%;transform:scaleX(0.9875);left:19.60px;top:688px;line-height:22px;font-size:11px;color:#cccccc;font-weight:bold;white-space:pre">TIMELINE</span>
</div>
<div id="editor">
<div id="code">
<div class="abs" style="left:74px;top:187px;width:845px;height:22px;border:2px solid #282828;border-right:0"></div>
<div class="abs" style="left:74.0px;top:275px;width:1px;height:418px;background:#404040"></div>
<div class="abs" style="left:109.2px;top:297px;width:1px;height:44px;background:#404040"></div>
<div class="abs" style="left:109.2px;top:385px;width:1px;height:286px;background:#404040"></div>
<div class="abs" style="left:144.4px;top:407px;width:1px;height:88px;background:#404040"></div>
<div class="abs" style="left:144.4px;top:561px;width:1px;height:88px;background:#404040"></div>
<div class="ln" style="top:56px;color:#6e7681">3</div>
<div class="cl" style="top:56px"><span class="k">namespace</span> <span class="c">Database\Seeders</span>;</div>
<div class="ln" style="top:78px;color:#6e7681">4</div>
<div class="ln" style="top:100px;color:#6e7681">5</div>
<div class="cl dim" style="top:100px"><span class="k">use</span> Illuminate\Database\Console\Seeds\<span class="c">WithoutModelEvents</span>;</div>
<div class="ln" style="top:122px;color:#6e7681">6</div>
<div class="ln" style="top:144px;color:#6e7681">7</div>
<div class="cl" style="top:144px"><span class="k">use</span> App\Models\<span class="c">User</span>;</div>
<div class="ln" style="top:166px;color:#6e7681">8</div>
<div class="cl" style="top:166px"><span class="k">use</span> Illuminate\Database\<span class="c">Seeder</span>;</div>
<div class="ln" style="top:188px;color:#cccccc">9</div>
<div class="cl" style="top:188px"><span class="k">use</span> Illuminate\Support\Facades\<span class="c">Hash</span>;</div>
<div class="ln" style="top:210px;color:#6e7681">10</div>
<div class="ln" style="top:232px;color:#6e7681">11</div>
<div class="cl" style="top:232px"><span class="k">class</span> <span class="c">UserSeeder</span> <span class="k">extends</span> <span class="c">Seeder</span></div>
<div class="ln" style="top:254px;color:#6e7681">12</div>
<div class="cl" style="top:254px"><span class="b1">{</span></div>
<div class="ln" style="top:276px;color:#6e7681">13</div>
<div class="cl" style="top:276px">    <span class="m">/**</span></div>
<div class="ln" style="top:298px;color:#6e7681">14</div>
<div class="cl" style="top:298px">    <span class="m"> * Run the database seeds.</span></div>
<div class="ln" style="top:320px;color:#6e7681">15</div>
<div class="cl" style="top:320px">    <span class="m"> */</span></div>
<div class="ln" style="top:342px;color:#6e7681">16</div>
<div class="cl" style="top:342px">    <span class="k">public</span> <span class="k">function</span> <span class="f">run</span><span class="b2">()</span>: <span class="k">void</span></div>
<div class="ln" style="top:364px;color:#6e7681">17</div>
<div class="cl" style="top:364px">    <span class="b2">{</span></div>
<div class="ln" style="top:386px;color:#6e7681">18</div>
<div class="cl" style="top:386px">        <span class="c">User</span>::<span class="f">create</span><span class="b3">(</span><span class="b1">[</span></div>
<div class="ln" style="top:408px;color:#6e7681">19</div>
<div class="cl" style="top:408px">            <span class="s">&#x27;name&#x27;</span> =&gt; <span class="s">&#x27;Admin SIMINLAB&#x27;</span>,</div>
<div class="ln" style="top:430px;color:#6e7681">20</div>
<div class="cl" style="top:430px">            <span class="s">&#x27;email&#x27;</span> =&gt; <span class="s">&#x27;admin@smkn2-mjk.sch.id&#x27;</span>,</div>
<div class="ln" style="top:452px;color:#6e7681">21</div>
<div class="cl" style="top:452px">            <span class="s">&#x27;password&#x27;</span> =&gt; <span class="c">Hash</span>::<span class="f">make</span><span class="b2">(</span><span class="s">&#x27;admin&#x27;</span><span class="b2">)</span>, <span class="m">// Enkripsi password</span></div>
<div class="ln" style="top:474px;color:#6e7681">22</div>
<div class="cl" style="top:474px">            <span class="s">&#x27;role&#x27;</span> =&gt; <span class="s">&#x27;Admin&#x27;</span>,</div>
<div class="ln" style="top:496px;color:#6e7681">23</div>
<div class="cl" style="top:496px">        <span class="b1">]</span><span class="b3">)</span>;</div>
<div class="ln" style="top:518px;color:#6e7681">24</div>
<div class="ln" style="top:540px;color:#6e7681">25</div>
<div class="cl" style="top:540px">        <span class="c">User</span>::<span class="f">create</span><span class="b3">(</span><span class="b1">[</span></div>
<div class="ln" style="top:562px;color:#6e7681">26</div>
<div class="cl" style="top:562px">            <span class="s">&#x27;name&#x27;</span> =&gt; <span class="s">&#x27;Siswa Contoh&#x27;</span>,</div>
<div class="ln" style="top:584px;color:#6e7681">27</div>
<div class="cl" style="top:584px">            <span class="s">&#x27;email&#x27;</span> =&gt; <span class="s">&#x27;siswa@smkn2-mjk.sch.id&#x27;</span>,</div>
<div class="ln" style="top:606px;color:#6e7681">28</div>
<div class="cl" style="top:606px">            <span class="s">&#x27;password&#x27;</span> =&gt; <span class="c">Hash</span>::<span class="f">make</span><span class="b2">(</span><span class="s">&#x27;siswa&#x27;</span><span class="b2">)</span>,</div>
<div class="ln" style="top:628px;color:#6e7681">29</div>
<div class="cl" style="top:628px">            <span class="s">&#x27;role&#x27;</span> =&gt; <span class="s">&#x27;Siswa&#x27;</span>,</div>
<div class="ln" style="top:650px;color:#6e7681">30</div>
<div class="cl" style="top:650px">        <span class="b1">]</span><span class="b3">)</span>;</div>
<div class="ln" style="top:672px;color:#6e7681">31</div>
<div class="cl" style="top:672px">    <span class="b2">}</span></div>
<div class="ln" style="top:694px;color:#6e7681">32</div>
<div class="cl" style="top:694px"><span class="b1">}</span></div>
<div class="abs" style="left:390px;top:187px;width:2px;height:22px;background:#aeafad"></div>
<div class="abs" style="left:0;top:57px;width:1023px;height:6px;background:linear-gradient(#000000b0,#00000000)"></div>
<svg class="abs" style="left:927px;top:57px" width="96" height="68" viewBox="0 0 96 68" shape-rendering="crispEdges" fill="none" stroke-width="1"><path d="M0 0.5h5M0 4.5h9M0 12.5h3M0 14.5h3M0 16.5h3M0 20.5h5M17 20.5h7M4 30.5h6M11 30.5h8M27 30.5h4" stroke="#569cd6" stroke-opacity="0.50"/><path d="M0 1.5h5M0 5.5h9M0 13.5h3M0 15.5h3M0 17.5h3M0 21.5h5M17 21.5h7M4 31.5h6M11 31.5h8M27 31.5h4" stroke="#569cd6" stroke-opacity="0.23"/><path d="M10 4.5h16M15 12.5h4M24 14.5h6M31 16.5h4M6 20.5h10M25 20.5h6M8 34.5h4M26 40.5h4M8 48.5h4M26 54.5h4" stroke="#4ec9b0" stroke-opacity="0.50"/><path d="M10 5.5h16M15 13.5h4M24 15.5h6M31 17.5h4M6 21.5h10M25 21.5h6M8 35.5h4M26 41.5h4M8 49.5h4M26 55.5h4" stroke="#4ec9b0" stroke-opacity="0.23"/><path d="M26 4.5h1M4 12.5h11M19 12.5h1M4 14.5h20M30 14.5h1M4 16.5h27M35 16.5h1M25 30.5h1M12 34.5h2M19 36.5h2M38 36.5h1M20 38.5h2M47 38.5h1M23 40.5h2M30 40.5h2M45 40.5h1M19 42.5h2M29 42.5h1M10 44.5h1M12 48.5h2M19 50.5h2M36 50.5h1M20 52.5h2M47 52.5h1M23 54.5h2M30 54.5h2M45 54.5h1M19 56.5h2M29 56.5h1M10 58.5h1" stroke="#cccccc" stroke-opacity="0.40"/><path d="M26 5.5h1M4 13.5h11M19 13.5h1M4 15.5h20M30 15.5h1M4 17.5h27M35 17.5h1M25 31.5h1M12 35.5h2M19 37.5h2M38 37.5h1M20 39.5h2M47 39.5h1M23 41.5h2M30 41.5h2M45 41.5h1M19 43.5h2M29 43.5h1M10 45.5h1M12 49.5h2M19 51.5h2M36 51.5h1M20 53.5h2M47 53.5h1M23 55.5h2M30 55.5h2M45 55.5h1M19 57.5h2M29 57.5h1M10 59.5h1" stroke="#cccccc" stroke-opacity="0.18"/><path d="M0 8.5h3" stroke="#569cd6" stroke-opacity="0.30"/><path d="M0 9.5h3" stroke="#569cd6" stroke-opacity="0.14"/><path d="M4 8.5h34M56 8.5h1" stroke="#cccccc" stroke-opacity="0.24"/><path d="M4 9.5h34M56 9.5h1" stroke="#cccccc" stroke-opacity="0.11"/><path d="M38 8.5h18" stroke="#4ec9b0" stroke-opacity="0.30"/><path d="M38 9.5h18" stroke="#4ec9b0" stroke-opacity="0.14"/><path d="M0 22.5h1M21 34.5h1M8 44.5h1M21 48.5h1M8 58.5h1M0 62.5h1" stroke="#ffd700" stroke-opacity="0.50"/><path d="M0 23.5h1M21 35.5h1M8 45.5h1M21 49.5h1M8 59.5h1M0 63.5h1" stroke="#ffd700" stroke-opacity="0.23"/><path d="M4 24.5h3M5 26.5h1M7 26.5h3M11 26.5h3M15 26.5h8M24 26.5h6M5 28.5h2M47 40.5h2M50 40.5h8M59 40.5h8" stroke="#6a9955" stroke-opacity="0.50"/><path d="M4 25.5h3M5 27.5h1M7 27.5h3M11 27.5h3M15 27.5h8M24 27.5h6M5 29.5h2M47 41.5h2M50 41.5h8M59 41.5h8" stroke="#6a9955" stroke-opacity="0.23"/><path d="M20 30.5h3M14 34.5h6M32 40.5h4M14 48.5h6M32 54.5h4" stroke="#dcdcaa" stroke-opacity="0.50"/><path d="M20 31.5h3M14 35.5h6M32 41.5h4M14 49.5h6M32 55.5h4" stroke="#dcdcaa" stroke-opacity="0.23"/><path d="M23 30.5h2M4 32.5h1M36 40.5h1M44 40.5h1M36 54.5h1M44 54.5h1M4 60.5h1" stroke="#da70d6" stroke-opacity="0.50"/><path d="M23 31.5h2M4 33.5h1M36 41.5h1M44 41.5h1M36 55.5h1M44 55.5h1M4 61.5h1" stroke="#da70d6" stroke-opacity="0.23"/><path d="M20 34.5h1M9 44.5h1M20 48.5h1M9 58.5h1" stroke="#179fff" stroke-opacity="0.50"/><path d="M20 35.5h1M9 45.5h1M20 49.5h1M9 59.5h1" stroke="#179fff" stroke-opacity="0.23"/><path d="M12 36.5h6M22 36.5h6M29 36.5h9M12 38.5h7M23 38.5h24M12 40.5h10M37 40.5h7M12 42.5h6M22 42.5h7M12 50.5h6M22 50.5h6M29 50.5h7M12 52.5h7M23 52.5h24M12 54.5h10M37 54.5h7M12 56.5h6M22 56.5h7" stroke="#ce9178" stroke-opacity="0.50"/><path d="M12 37.5h6M22 37.5h6M29 37.5h9M12 39.5h7M23 39.5h24M12 41.5h10M37 41.5h7M12 43.5h6M22 43.5h7M12 51.5h6M22 51.5h6M29 51.5h7M12 53.5h7M23 53.5h24M12 55.5h10M37 55.5h7M12 57.5h6M22 57.5h7" stroke="#ce9178" stroke-opacity="0.23"/></svg>
<div class="abs" style="left:1022px;top:57px;width:15px;height:652px;border-left:1px solid #161616;border-top:1px solid #141414;background:#1f1f1f"></div>
<div class="abs" style="left:1023px;top:79px;width:14px;height:313px;background:#464646"></div>
<div class="abs" style="left:1024px;top:140px;width:13px;height:2px;background:#8c8c8c"></div>
</div>
<div id="tabs">
<div class="abs" style="left:0;top:0;width:931px;height:36px;overflow:hidden"><div class="tab" style="left:0px;width:44px"></div>
<div class="tab" style="left:44px;width:312px"></div>
<div class="tab" style="left:356px;width:311px"></div>
<div class="tab active" style="left:667px;width:151px"></div>
<div class="tab" style="left:818px;width:115px"></div>
<span class="abs " style="transform-origin:0 50%;transform:scaleX(1.0229);left:0.60px;top:1px;line-height:36px;font-size:13px;color:#9d9d9d;white-space:pre">hp</span>
<svg class="abs" style="left:57.80000000000001px;top:12px" width="12.8" height="9.8" viewBox="0 0 12.8 9.8" ><path d="M.5 1.5 C1.2 .4 2.4 0 3.4 0 C4.4 0 5.3 .3 5.8 1 C6.3 .5 7.2 .3 8.2 .35 C9.6 .4 10.6 .9 11.4 1.8 C12.2 2.7 12.7 3.9 12.6 5.2 L12 9.7 L8.8 9.7 L8.6 7.1 L6.6 7.1 L6.5 9.7 L4.3 9.7 L4.2 7.3 L3.4 7.3 L3.3 9 L2.1 9 L2.1 6.6 C1.8 6.9 1.4 7 1 6.9 L.3 6.8 C.1 5.6 0 4.3 .1 3.2 C.15 2.5 .25 1.9 .5 1.5 Z" fill="#a87bd0"/><path d="M5.5 1.2 C6 2.2 5.9 3.8 5 4.6 C4.4 5.1 3.6 5.1 3.1 4.7" fill="none" stroke="#6b4a9a" stroke-width=".6" opacity=".7"/><path d="M7.6 7.2 V9.7" stroke="#5a3d86" stroke-width=".5" opacity=".55"/></svg>
<span class="abs " style="transform-origin:0 50%;transform:scaleX(0.9469);left:75.80px;top:1px;line-height:36px;font-size:13px;color:#9d9d9d;white-space:pre">2025_09_25_034323_create_items_table.php</span>
<svg class="abs" style="left:369.70000000000005px;top:12px" width="12.8" height="9.8" viewBox="0 0 12.8 9.8" ><path d="M.5 1.5 C1.2 .4 2.4 0 3.4 0 C4.4 0 5.3 .3 5.8 1 C6.3 .5 7.2 .3 8.2 .35 C9.6 .4 10.6 .9 11.4 1.8 C12.2 2.7 12.7 3.9 12.6 5.2 L12 9.7 L8.8 9.7 L8.6 7.1 L6.6 7.1 L6.5 9.7 L4.3 9.7 L4.2 7.3 L3.4 7.3 L3.3 9 L2.1 9 L2.1 6.6 C1.8 6.9 1.4 7 1 6.9 L.3 6.8 C.1 5.6 0 4.3 .1 3.2 C.15 2.5 .25 1.9 .5 1.5 Z" fill="#a87bd0"/><path d="M5.5 1.2 C6 2.2 5.9 3.8 5 4.6 C4.4 5.1 3.6 5.1 3.1 4.7" fill="none" stroke="#6b4a9a" stroke-width=".6" opacity=".7"/><path d="M7.6 7.2 V9.7" stroke="#5a3d86" stroke-width=".5" opacity=".55"/></svg>
<span class="abs " style="transform-origin:0 50%;transform:scaleX(0.9445);left:387.70px;top:1px;line-height:36px;font-size:13px;color:#9d9d9d;white-space:pre">2025_09_25_034430_create_loans_table.php</span>
<svg class="abs" style="left:680.6px;top:12px" width="12.8" height="9.8" viewBox="0 0 12.8 9.8" ><path d="M.5 1.5 C1.2 .4 2.4 0 3.4 0 C4.4 0 5.3 .3 5.8 1 C6.3 .5 7.2 .3 8.2 .35 C9.6 .4 10.6 .9 11.4 1.8 C12.2 2.7 12.7 3.9 12.6 5.2 L12 9.7 L8.8 9.7 L8.6 7.1 L6.6 7.1 L6.5 9.7 L4.3 9.7 L4.2 7.3 L3.4 7.3 L3.3 9 L2.1 9 L2.1 6.6 C1.8 6.9 1.4 7 1 6.9 L.3 6.8 C.1 5.6 0 4.3 .1 3.2 C.15 2.5 .25 1.9 .5 1.5 Z" fill="#a87bd0"/><path d="M5.5 1.2 C6 2.2 5.9 3.8 5 4.6 C4.4 5.1 3.6 5.1 3.1 4.7" fill="none" stroke="#6b4a9a" stroke-width=".6" opacity=".7"/><path d="M7.6 7.2 V9.7" stroke="#5a3d86" stroke-width=".5" opacity=".55"/></svg>
<span class="abs " style="transform-origin:0 50%;transform:scaleX(0.9696);left:698.80px;top:1px;line-height:36px;font-size:13px;color:#ffffff;white-space:pre">UserSeeder.php</span>
<svg class="abs" style="left:798.5999999999999px;top:12.899999999999999px" width="10" height="10" viewBox="0 0 10 10" ><path d="M.8 .8 L9.2 9.2 M9.2 .8 L.8 9.2" stroke="#e8e8e8" stroke-width="1.25" fill="none"/></svg>
<svg class="abs" style="left:832px;top:12px" width="12.8" height="9.8" viewBox="0 0 12.8 9.8" ><path d="M.5 1.5 C1.2 .4 2.4 0 3.4 0 C4.4 0 5.3 .3 5.8 1 C6.3 .5 7.2 .3 8.2 .35 C9.6 .4 10.6 .9 11.4 1.8 C12.2 2.7 12.7 3.9 12.6 5.2 L12 9.7 L8.8 9.7 L8.6 7.1 L6.6 7.1 L6.5 9.7 L4.3 9.7 L4.2 7.3 L3.4 7.3 L3.3 9 L2.1 9 L2.1 6.6 C1.8 6.9 1.4 7 1 6.9 L.3 6.8 C.1 5.6 0 4.3 .1 3.2 C.15 2.5 .25 1.9 .5 1.5 Z" fill="#a87bd0"/><path d="M5.5 1.2 C6 2.2 5.9 3.8 5 4.6 C4.4 5.1 3.6 5.1 3.1 4.7" fill="none" stroke="#6b4a9a" stroke-width=".6" opacity=".7"/><path d="M7.6 7.2 V9.7" stroke="#5a3d86" stroke-width=".5" opacity=".55"/></svg>
<span class="abs " style="transform-origin:0 50%;transform:scaleX(0.9837);left:850.40px;top:1px;line-height:36px;font-size:13px;color:#9d9d9d;white-space:pre">User.php</span>
<div class="abs" style="left:367px;top:32px;width:563.5px;height:3px;background:#444444"></div></div>
<svg class="abs" style="left:943px;top:11px" width="12" height="14" viewBox="0 0 12 14" ><path d="M1.2 1.2 L10.8 7 L1.2 12.8 Z" fill="none" stroke="#d0d0d0" stroke-width="1.25" stroke-linejoin="round"/></svg>
<svg class="abs" style="left:960.5px;top:15px" width="9" height="6" viewBox="0 0 9 6" ><path d="M.8 1 L4.5 4.7 L8.2 1" fill="none" stroke="#ccc" stroke-width="1.1"/></svg>
<svg class="abs" style="left:981.5px;top:10.5px" width="14" height="14" viewBox="0 0 14 14" ><rect x=".6" y=".6" width="12.8" height="12.8" rx="1.6" fill="none" stroke="#d0d0d0" stroke-width="1.15"/><path d="M7 .6 V13.4" stroke="#d0d0d0" stroke-width="1.15"/></svg>
<svg class="abs" style="left:1008px;top:15px" width="14" height="5" viewBox="0 0 14 5" ><circle cx="1.5" cy="2.5" r="1.25" fill="#d4d4d4"/><circle cx="6.5" cy="2.5" r="1.25" fill="#d4d4d4"/><circle cx="11.5" cy="2.5" r="1.25" fill="#d4d4d4"/></svg>
</div>
<span class="abs " style="transform-origin:0 50%;transform:scaleX(0.9794);left:15.90px;top:36px;line-height:22px;font-size:13px;color:#a9a9a9;white-space:pre">database</span>
<svg class="abs" style="left:73px;top:40.6px" width="7" height="11" viewBox="0 0 7 11" ><path d="M1.2 .7 L5.8 5.6 L1.2 10.5" fill="none" stroke="#a9a9a9" stroke-width="1.1"/></svg>
<span class="abs " style="transform-origin:0 50%;transform:scaleX(0.9578);left:83.50px;top:36px;line-height:22px;font-size:13px;color:#a9a9a9;white-space:pre">seeders</span>
<svg class="abs" style="left:132.5px;top:40.6px" width="7" height="11" viewBox="0 0 7 11" ><path d="M1.2 .7 L5.8 5.6 L1.2 10.5" fill="none" stroke="#a9a9a9" stroke-width="1.1"/></svg>
<svg class="abs" style="left:147px;top:41.4px" width="12.8" height="9.8" viewBox="0 0 12.8 9.8" ><path d="M.5 1.5 C1.2 .4 2.4 0 3.4 0 C4.4 0 5.3 .3 5.8 1 C6.3 .5 7.2 .3 8.2 .35 C9.6 .4 10.6 .9 11.4 1.8 C12.2 2.7 12.7 3.9 12.6 5.2 L12 9.7 L8.8 9.7 L8.6 7.1 L6.6 7.1 L6.5 9.7 L4.3 9.7 L4.2 7.3 L3.4 7.3 L3.3 9 L2.1 9 L2.1 6.6 C1.8 6.9 1.4 7 1 6.9 L.3 6.8 C.1 5.6 0 4.3 .1 3.2 C.15 2.5 .25 1.9 .5 1.5 Z" fill="#a87bd0"/><path d="M5.5 1.2 C6 2.2 5.9 3.8 5 4.6 C4.4 5.1 3.6 5.1 3.1 4.7" fill="none" stroke="#6b4a9a" stroke-width=".6" opacity=".7"/><path d="M7.6 7.2 V9.7" stroke="#5a3d86" stroke-width=".5" opacity=".55"/></svg>
<span class="abs " style="transform-origin:0 50%;transform:scaleX(0.9728);left:165.20px;top:36px;line-height:22px;font-size:13px;color:#a9a9a9;white-space:pre">UserSeeder.php</span>
<svg class="abs" style="left:261.5px;top:40.6px" width="7" height="11" viewBox="0 0 7 11" ><path d="M1.2 .7 L5.8 5.6 L1.2 10.5" fill="none" stroke="#a9a9a9" stroke-width="1.1"/></svg>
<svg class="abs" style="left:272.4px;top:48.2px" width="10" height="3" viewBox="0 0 10 3" ><circle cx="1.1" cy="1.5" r="1" fill="#a9a9a9"/><circle cx="4.5" cy="1.5" r="1" fill="#a9a9a9"/><circle cx="7.9" cy="1.5" r="1" fill="#a9a9a9"/></svg>
</div>
<div id="status">
<div class="abs" style="left:0;top:0;width:34px;height:22px;background:#0078d4"></div>
<svg class="abs" style="left:12px;top:4px" width="11" height="14" viewBox="0 0 11 14" ><path d="M1 4.9 L5.1 8.8 L1 12.7 M9.5 1 L5.6 4.8 L9.5 8.6" fill="none" stroke="#ffffff" stroke-width="1.15"/></svg>
<svg class="abs" style="left:43px;top:4.7000000000000455px" width="12.3" height="12.3" viewBox="0 0 13 13" ><circle cx="6.5" cy="6.5" r="5.7" fill="none" stroke="#cccccc" stroke-width="1.05"/><path d="M4.2 4.2 L8.8 8.8 M8.8 4.2 L4.2 8.8" stroke="#cccccc" stroke-width="1.05" fill="none"/></svg>
<span class="abs " style="transform-origin:0 50%;transform:scaleX(1.0617);left:59.10px;top:1px;line-height:21px;font-size:12px;color:#cccccc;white-space:pre">0</span>
<svg class="abs" style="left:69.8px;top:3.2999999999999545px" width="12.6" height="11.8" viewBox="0 0 13 12" ><path d="M6.5 1 L12.2 11.2 H.8 Z" fill="none" stroke="#cccccc" stroke-width="1.05" stroke-linejoin="round"/><path d="M6.5 4.6 V8 M6.5 9 V10.2" stroke="#cccccc" stroke-width="1.05"/></svg>
<span class="abs " style="transform-origin:0 50%;transform:scaleX(1.0467);left:86.10px;top:1px;line-height:21px;font-size:12px;color:#cccccc;white-space:pre">0</span>
<svg class="abs" style="left:111.2px;top:3.6000000000000227px" width="9.5" height="12.5" viewBox="0 0 9.5 12.5" ><path d="M4.4 .7 H8.2 L6.4 4.4 H8.8 L2.2 11.8 L3.6 6.8 H1 Z" fill="none" stroke="#cccccc" stroke-width="1" stroke-linejoin="round"/></svg>
<span class="abs " style="transform-origin:0 50%;transform:scaleX(0.9580);left:887.10px;top:1px;line-height:21px;font-size:12px;color:#cccccc;white-space:pre">Ln 9, Col 37</span>
<span class="abs " style="transform-origin:0 50%;transform:scaleX(0.9255);left:964.40px;top:1px;line-height:21px;font-size:12px;color:#cccccc;white-space:pre">Spaces: 4</span>
<span class="abs " style="transform-origin:0 50%;transform:scaleX(0.9559);left:1029.10px;top:1px;line-height:21px;font-size:12px;color:#cccccc;white-space:pre">UTF-8</span>
<span class="abs " style="transform-origin:0 50%;transform:scaleX(0.8348);left:1077.40px;top:1px;line-height:21px;font-size:12px;color:#cccccc;white-space:pre">LF</span>
<span class="abs " style="transform-origin:0 50%;transform:scaleX(0.8911);left:1124.80px;top:1px;line-height:21px;font-size:12px;color:#cccccc;white-space:pre">PHP</span>
<span class="abs " style="transform-origin:0 50%;transform:scaleX(0.9623);left:1209.40px;top:1px;line-height:21px;font-size:12px;color:#cccccc;white-space:pre">Go Live</span>
<span class="abs " style="transform-origin:0 50%;transform:scaleX(1.0055);left:1282.10px;top:1px;line-height:21px;font-size:12px;color:#cccccc;white-space:pre">Prettier</span>
<svg class="abs" style="left:1106.4px;top:6px" width="11.4" height="10" viewBox="0 0 12 13" preserveAspectRatio="none"><path d="M4.4 1 Q2.8 1 2.8 2.4 V5 Q2.8 6.3 .9 6.5 Q2.8 6.7 2.8 8 V10.6 Q2.8 12 4.4 12 M7.6 1 Q9.2 1 9.2 2.4 V5 Q9.2 6.3 11.1 6.5 Q9.2 6.7 9.2 8 V10.6 Q9.2 12 7.6 12" fill="none" stroke="#cccccc" stroke-width="1.25"/></svg>
<svg class="abs" style="left:1162px;top:4px" width="16" height="14" viewBox="0 0 16 14" ><rect x="2.4" y=".5" width="11.3" height="6.2" rx="2.8" fill="#cccccc"/><circle cx="5.3" cy="3.5" r="1.65" fill="#181818"/><circle cx="10.6" cy="3.5" r="1.65" fill="#181818"/><ellipse cx="7.9" cy="9.3" rx="7.4" ry="3.9" fill="#cccccc"/><rect x="3.4" y="7.2" width="9" height="3.5" rx=".6" fill="#181818"/><rect x="5.9" y="7.7" width="1.2" height="2.6" fill="#cccccc"/><rect x="8.8" y="7.7" width="1.2" height="2.6" fill="#cccccc"/></svg>
<svg class="abs" style="left:1194px;top:4.5px" width="12" height="13" viewBox="0 0 12 13" ><path d="M2.16 9.04 A5 5 0 1 1 9.24 9.04 M3.79 7.41 A2.7 2.7 0 1 1 7.61 7.41" fill="none" stroke="#cccccc" stroke-width="1.05"/><circle cx="5.7" cy="5.5" r="1" fill="#cccccc"/><path d="M5.7 5.5 V12.6" stroke="#e6e6e6" stroke-width="1.5"/></svg>
<svg class="abs" style="left:1265.7px;top:5px" width="12.6" height="12.6" viewBox="0 0 13 13" ><circle cx="6.5" cy="6.5" r="5.6" fill="none" stroke="#cccccc" stroke-width="1.1"/><path d="M2.6 10.4 L10.4 2.6" stroke="#cccccc" stroke-width="1.1"/></svg>
<svg class="abs" style="left:1338.5px;top:4.399999999999977px" width="12" height="13" viewBox="0 0 12 13" ><path d="M6 1 C3.4 1 2.4 3 2.4 5 V7.8 L1 9.8 H11 L9.6 7.8 V5 C9.6 3 8.6 1 6 1 Z M4.6 10.2 Q6 12.6 7.4 10.2" fill="none" stroke="#cccccc" stroke-width="1.1" stroke-linejoin="round"/></svg>
</div>
<div id="bottom"></div>
</body>
</html>
